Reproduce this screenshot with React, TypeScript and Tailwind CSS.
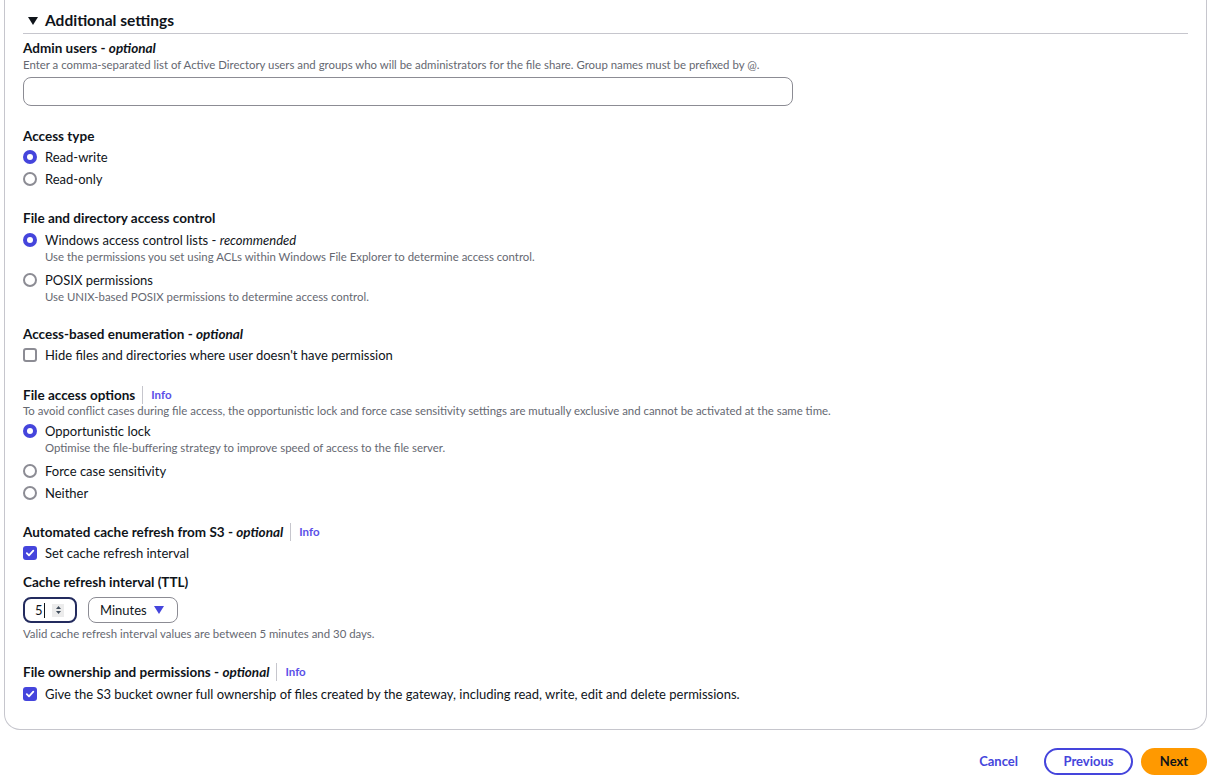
import React from 'react'

const BLUE = 'bg-[#4545dc]'

function Radio({ checked }: { checked?: boolean }) {
    return checked ? (
        <span className={`mt-[3px] shrink-0 w-[14px] h-[14px] rounded-full ${BLUE} flex items-center justify-center`}>
            <span className="w-[6px] h-[6px] rounded-full bg-white" />
        </span>
    ) : (
        <span className="mt-[3px] shrink-0 w-[14px] h-[14px] rounded-full border-2 border-[#8c8c94] bg-white" />
    )
}

function Checkbox({ checked }: { checked?: boolean }) {
    return checked ? (
        <span className={`mt-[3px] shrink-0 w-[14px] h-[14px] rounded-[3px] ${BLUE} flex items-center justify-center`}>
            <svg width="10" height="10" viewBox="0 0 10 10" fill="none">
                <path d="M1.8 5.2 L4 7.4 L8.3 2.6" stroke="white" strokeWidth="1.8" strokeLinecap="round" strokeLinejoin="round" />
            </svg>
        </span>
    ) : (
        <span className="mt-[3px] shrink-0 w-[14px] h-[14px] rounded-[3px] border-2 border-[#8c8c94] bg-white" />
    )
}

function Option({ control, label, desc }: { control: React.ReactNode; label: React.ReactNode; desc?: string }) {
    return (
        <div className={`flex items-start gap-2 ${desc ? 'pb-[3px]' : ''}`}>
            {control}
            <div className="flex flex-col">
                <span className="text-[13px] leading-[20px] text-[#0f141a]">{label}</span>
                {desc && <span className="-mt-px text-[11.4px] leading-[16px] text-[#656871]">{desc}</span>}
            </div>
        </div>
    )
}

function Heading({ children, info }: { children: React.ReactNode; info?: boolean }) {
    return (
        <div className="flex items-center text-[13.5px] leading-[20px] font-bold text-[#0f141a]">
            <span>{children}</span>
            {info && (
                <>
                    <span className="ml-[7px] mr-[8px] w-px h-[18px] bg-[#c6c6cd]" />
                    <span className="text-[11.5px] text-[#5b4fe8]">Info</span>
                </>
            )}
        </div>
    )
}

const Opt = ({ children }: { children: React.ReactNode }) => (
    <span className="font-bold italic">{children}</span>
)

export default function App() {
    return (
        <div className="w-[1213px] h-[784px] bg-white overflow-hidden font-['Lato',sans-serif]">
            <div className="ml-[4px] w-[1203px] border-x border-b border-[#c6c6cd] rounded-b-[16px] pl-[18px] pr-[18px] pb-[25px]">
                <div className="pt-[10px] pb-[3px] border-b border-[#c6c6cd] flex items-center gap-[7px] pl-[5px]">
                    <svg width="10" height="8" viewBox="0 0 10 8" className="mt-px">
                        <path d="M0 0 H10 L5 8 Z" fill="#0f141a" />
                    </svg>
                    <span className="text-[15.5px] leading-[20px] font-bold text-[#0f141a]">Additional settings</span>
                </div>

                <div className="flex flex-col pt-[4px]">
                    <div className="flex flex-col">
                        <Heading>Admin users - <Opt>optional</Opt></Heading>
                        <span className="-mt-px text-[11.4px] leading-[16px] text-[#656871]">
                            Enter a comma-separated list of Active Directory users and groups who will be administrators for the file share. Group names must be prefixed by @.
                        </span>
                        <div className="mt-[4px] w-[770px] h-[29px] rounded-[8px] border border-[#8c8c94]" />
                    </div>

                    <div className="mt-[20px] flex flex-col">
                        <Heading>Access type</Heading>
                        <div className="mt-px flex flex-col gap-[2px]">
                            <Option control={<Radio checked />} label="Read-write" />
                            <Option control={<Radio />} label="Read-only" />
                        </div>
                    </div>

                    <div className="mt-[19px] flex flex-col">
                        <Heading>File and directory access control</Heading>
                        <div className="mt-[2px] flex flex-col gap-[2px]">
                            <Option
                                control={<Radio checked />}
                                label={<>Windows access control lists - <i>recommended</i></>}
                                desc="Use the permissions you set using ACLs within Windows File Explorer to determine access control."
                            />
                            <Option
                                control={<Radio />}
                                label="POSIX permissions"
                                desc="Use UNIX-based POSIX permissions to determine access control."
                            />
                        </div>
                    </div>

                    <div className="mt-[16px] flex flex-col">
                        <Heading>Access-based enumeration - <Opt>optional</Opt></Heading>
                        <div className="mt-px">
                            <Option control={<Checkbox />} label="Hide files and directories where user doesn't have permission" />
                        </div>
                    </div>

                    <div className="mt-[20px] flex flex-col">
                        <Heading info>File access options</Heading>
                        <span className="-mt-[2px] text-[11.4px] leading-[16px] text-[#656871]">
                            To avoid conflict cases during file access, the opportunistic lock and force case sensitivity settings are mutually exclusive and cannot be activated at the same time.
                        </span>
                        <div className="mt-[2px] flex flex-col gap-[2px]">
                            <Option
                                control={<Radio checked />}
                                label="Opportunistic lock"
                                desc="Optimise the file-buffering strategy to improve speed of access to the file server."
                            />
                            <Option control={<Radio />} label="Force case sensitivity" />
                            <Option control={<Radio />} label="Neither" />
                        </div>
                    </div>

                    <div className="mt-[19px] flex flex-col">
                        <Heading info>Automated cache refresh from S3 - <Opt>optional</Opt></Heading>
                        <div className="mt-px">
                            <Option control={<Checkbox checked />} label="Set cache refresh interval" />
                        </div>
                        <div className="mt-[9px]">
                            <Heading>Cache refresh interval (TTL)</Heading>
                        </div>
                        <div className="mt-[5px] flex items-center gap-[11px]">
                            <div className="w-[54px] h-[26px] rounded-[8px] border-2 border-[#232b5e] flex items-center pl-[10px] pr-[11px]">
                                <span className="text-[13px] leading-[20px] text-[#0f141a]">5</span>
                                <span className="ml-px w-px h-[15px] bg-[#0f141a]" />
                                <span className="ml-auto w-[12px] h-[13px] bg-[#ececec] flex flex-col items-center justify-center gap-[2px]">
                                    <svg width="5" height="3" viewBox="0 0 5 3"><path d="M0 3 L2.5 0 L5 3 Z" fill="#414d5c" /></svg>
                                    <svg width="5" height="3" viewBox="0 0 5 3"><path d="M0 0 L5 0 L2.5 3 Z" fill="#414d5c" /></svg>
                                </span>
                            </div>
                            <div className="w-[90px] h-[26px] rounded-[8px] border border-[#8c8c94] flex items-center pl-[11px] pr-[13px] justify-between">
                                <span className="text-[13px] leading-[20px] text-[#0f141a]">Minutes</span>
                                <svg width="10" height="8" viewBox="0 0 10 8"><path d="M0 0 H10 L5 8 Z" fill="#4545dc" /></svg>
                            </div>
                        </div>
                        <span className="mt-[3px] text-[11.4px] leading-[16px] text-[#656871]">
                            Valid cache refresh interval values are between 5 minutes and 30 days.
                        </span>
                    </div>

                    <div className="mt-[20px] flex flex-col">
                        <Heading info>File ownership and permissions - <Opt>optional</Opt></Heading>
                        <div className="mt-[2px]">
                            <Option
                                control={<Checkbox checked />}
                                label="Give the S3 bucket owner full ownership of files created by the gateway, including read, write, edit and delete permissions."
                            />
                        </div>
                    </div>
                </div>
            </div>

            <div className="mt-[18px] mr-[6px] flex items-center justify-end gap-[8px]">
                <button className="h-[27px] px-[18px] text-[13px] font-bold text-[#4545dc]">Cancel</button>
                <button className="h-[27px] w-[89px] rounded-full border-2 border-[#4545dc] text-[13px] font-bold text-[#4545dc]">Previous</button>
                <button className="h-[27px] w-[66px] rounded-full bg-[#ff9900] text-[13px] font-bold text-[#0f141a]">Next</button>
            </div>
        </div>
    )
}
